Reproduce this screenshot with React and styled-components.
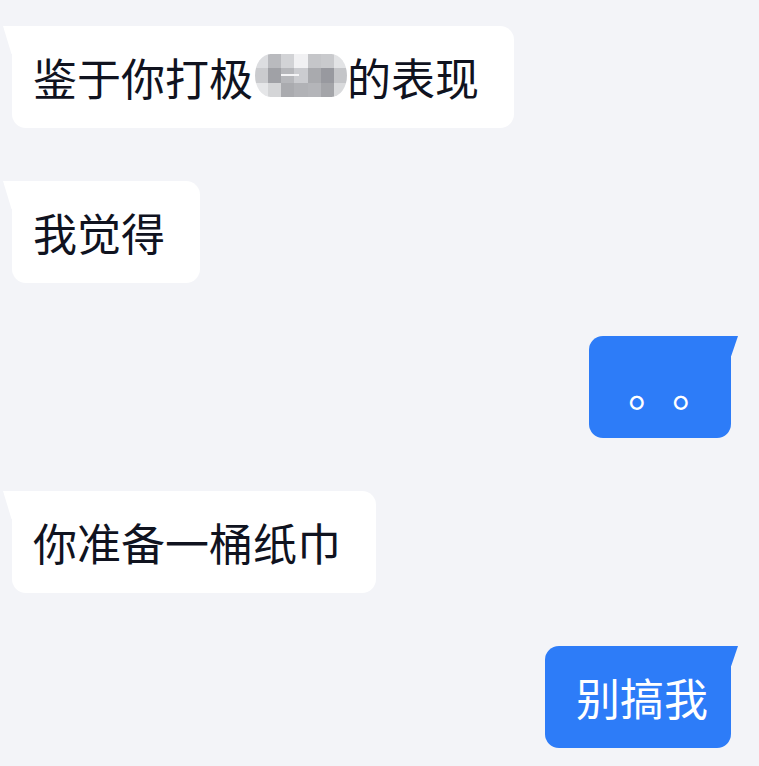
import styled, { createGlobalStyle, css } from "styled-components";

const GlobalStyle = createGlobalStyle`
  html, body {
    margin: 0;
    padding: 0;
    background: #f3f4f8;
  }
  body {
    font-family: "Noto Sans CJK SC", "Noto Sans", sans-serif;
    text-spacing-trim: space-all;
  }
`;

const Thread = styled.div`
  display: flex;
  flex-direction: column;
  gap: 53px;
  padding: 26px 0 40px;
  min-height: 766px;
  box-sizing: border-box;
  background: #f3f4f8;
`;

const Bubble = styled.div`
  position: relative;
  box-sizing: border-box;
  height: 102px;
  display: flex;
  align-items: center;
  font-size: 44px;
  line-height: 1;
  white-space: nowrap;

  &::before {
    content: "";
    position: absolute;
    top: 0;
  }

  ${(p) =>
    p.$mine
      ? css`
          align-self: flex-end;
          margin-right: 28px;
          padding: 0 23px 0 31px;
          background: #2d7cf8;
          color: #ffffff;
          border-radius: 14px 0 14px 14px;

          &::before {
            right: -7px;
            width: 8px;
            height: 20px;
            background: #2d7cf8;
            clip-path: polygon(0 0, 100% 0, 15% 100%, 0 100%);
          }
        `
      : css`
          align-self: flex-start;
          margin-left: 12px;
          padding: 0 35px 0 21px;
          background: #ffffff;
          color: #10131f;
          border-radius: 0 14px 14px 14px;

          &::before {
            left: -9px;
            width: 10px;
            height: 28px;
            background: #ffffff;
            clip-path: polygon(0 0, 100% 0, 100% 100%, 85% 100%);
          }
        `}
`;

const Dots = styled.span`
  margin: 0 -8px 0 8px;
  font-size: 45px;
  letter-spacing: -1px;
`;

const Hidden = styled.span`
  position: relative;
  display: inline-block;
  width: 93px;
  height: 44px;
  margin: 0 -1px 0 2px;
`;

const Mosaic = styled.span`
  position: absolute;
  left: 0;
  top: -1px;
  width: 92px;
  height: 43px;
  display: grid;
  grid-template-columns: repeat(7, 1fr);
  grid-template-rows: repeat(3, 1fr);
  border-radius: 16px / 22px;
  overflow: hidden;
  filter: blur(0.4px);
`;

const Tile = styled.span`
  background: ${(p) => p.$c};
`;

const Streak = styled.span`
  position: absolute;
  left: 26px;
  top: 19px;
  width: 18px;
  height: 2px;
  background: #f4f4f6;
`;

const tiles = [
  "#dcdde0", "#b9babe", "#d2d3d6", "#f1f1f3", "#c5c6c9", "#c9cacd", "#e2e3e5",
  "#cacbce", "#a0a1a6", "#b6b7bb", "#cbccd0", "#a9aaae", "#98999f", "#c4c5c8",
  "#e5e6e8", "#d4d5d7", "#aaabaf", "#b1b2b6", "#b4b5b9", "#a4a5a9", "#d9dadc",
];

function Pixelated() {
  return (
    <Hidden>
      <Mosaic>
        {tiles.map((c, i) => (
          <Tile key={i} $c={c} />
        ))}
      </Mosaic>
      <Streak />
    </Hidden>
  );
}

export default function App() {
  return (
    <>
      <GlobalStyle />
      <Thread>
        <Bubble>
          鉴于你打极
          <Pixelated />
          的表现
        </Bubble>
        <Bubble>我觉得</Bubble>
        <Bubble $mine>
          <Dots>。。</Dots>
        </Bubble>
        <Bubble>你准备一桶纸巾</Bubble>
        <Bubble $mine>别搞我</Bubble>
      </Thread>
    </>
  );
}
